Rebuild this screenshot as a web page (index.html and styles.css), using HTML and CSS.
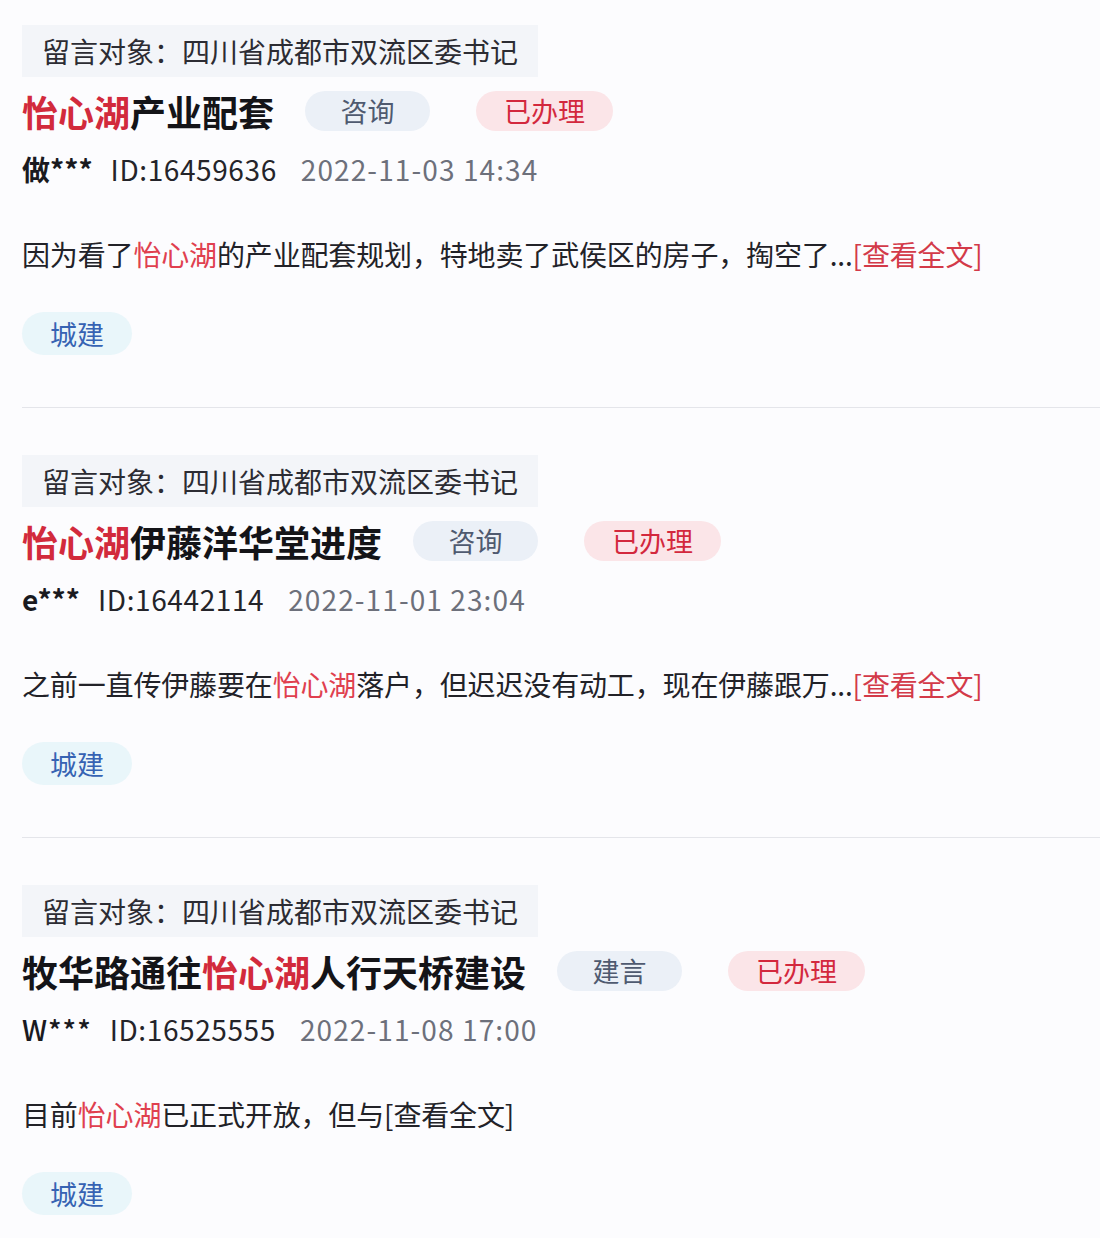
FILE: index.html
```html
<!DOCTYPE html>
<html lang="zh-CN">
<head>
<meta charset="utf-8">
<title>留言列表</title>
<link rel="stylesheet" href="styles.css">
</head>
<body>
<div class="list">
  <div class="card">
    <div class="target">留言对象：四川省成都市双流区委书记</div>
    <div class="title-row">
      <h2 class="title"><span class="hl">怡心湖</span>产业配套</h2>
      <span class="pill type">咨询</span>
      <span class="pill status">已办理</span>
    </div>
    <div class="meta"><span class="user">做***</span><span class="id">ID:16459636</span><span class="date">2022-11-03 14:34</span></div>
    <p class="body">因为看了<span class="kw">怡心湖</span>的产业配套规划，特地卖了武侯区的房子，掏空了...<span class="more">[查看全文]</span></p>
    <div class="tags"><span class="tag">城建</span></div>
  </div>
  <div class="card">
    <div class="target">留言对象：四川省成都市双流区委书记</div>
    <div class="title-row">
      <h2 class="title"><span class="hl">怡心湖</span>伊藤洋华堂进度</h2>
      <span class="pill type">咨询</span>
      <span class="pill status">已办理</span>
    </div>
    <div class="meta"><span class="user">e***</span><span class="id">ID:16442114</span><span class="date">2022-11-01 23:04</span></div>
    <p class="body">之前一直传伊藤要在<span class="kw">怡心湖</span>落户，但迟迟没有动工，现在伊藤跟万...<span class="more">[查看全文]</span></p>
    <div class="tags"><span class="tag">城建</span></div>
  </div>
  <div class="card">
    <div class="target">留言对象：四川省成都市双流区委书记</div>
    <div class="title-row">
      <h2 class="title">牧华路通往<span class="hl">怡心湖</span>人行天桥建设</h2>
      <span class="pill type">建言</span>
      <span class="pill status">已办理</span>
    </div>
    <div class="meta"><span class="user plain">W***</span><span class="id">ID:16525555</span><span class="date">2022-11-08 17:00</span></div>
    <p class="body">目前<span class="kw">怡心湖</span>已正式开放，但与<span class="more plain">[查看全文]</span></p>
    <div class="tags"><span class="tag">城建</span></div>
  </div>
</div>
</body>
</html>
```
FILE: styles.css
```css
html, body {
  margin: 0;
  padding: 0;
  background: #fcfcfe;
}
body {
  font-family: "Noto Sans CJK SC", "Noto Sans", sans-serif;
  color: #1f1f24;
  width: 1100px;
  height: 1238px;
  overflow: hidden;
}
.list {
  padding-left: 22px;
}
.card {
  padding: 47px 0 52px;
  border-bottom: 1px solid #e4e5ea;
}
.card:first-child {
  padding-top: 25px;
}
.card:last-child {
  border-bottom: none;
}
.target {
  display: inline-block;
  height: 52px;
  line-height: 52px;
  padding: 0 20px;
  background: #f3f5f9;
  font-size: 28px;
  color: #2c2c33;
}
.title-row {
  display: flex;
  align-items: center;
  height: 40px;
  margin-top: 14px;
}
.title {
  margin: 0;
  font-size: 36px;
  font-weight: 700;
  line-height: 40px;
  color: #141418;
}
.hl {
  color: #d22a3c;
}
.pill {
  height: 40px;
  line-height: 40px;
  min-width: 125px;
  box-sizing: border-box;
  padding: 0 28px;
  border-radius: 20px;
  font-size: 27px;
  text-align: center;
}
.pill.type {
  margin-left: 31px;
  background: #ebf0f7;
  color: #4f5a70;
}
.pill.status {
  margin-left: 46px;
  background: #fbe5e8;
  color: #d3283d;
}
.meta {
  margin-top: 18px;
  height: 40px;
  line-height: 40px;
  font-size: 28px;
  display: flex;
  align-items: center;
}
.user {
  font-weight: 700;
  color: #1a1a1f;
  margin-right: 18px;
}
.user.plain {
  font-weight: 500;
  letter-spacing: 1px;
}
.id {
  color: #24242a;
  margin-right: 24px;
  letter-spacing: 0.6px;
}
.date {
  color: #6d707b;
  letter-spacing: 1.1px;
}
.body {
  margin: 45px 0 0;
  height: 40px;
  line-height: 40px;
  font-size: 28px;
  color: #222228;
  letter-spacing: -0.15px;
}
.kw {
  color: #e0404f;
}
.more {
  color: #d33a49;
}
.more.plain {
  color: #222228;
}
.tags {
  display: flex;
  margin-top: 38px;
}
.tag {
  height: 43px;
  line-height: 43px;
  padding: 0 28px;
  border-radius: 22px;
  background: #e9f6fa;
  color: #3663b3;
  font-size: 27px;
}
```
